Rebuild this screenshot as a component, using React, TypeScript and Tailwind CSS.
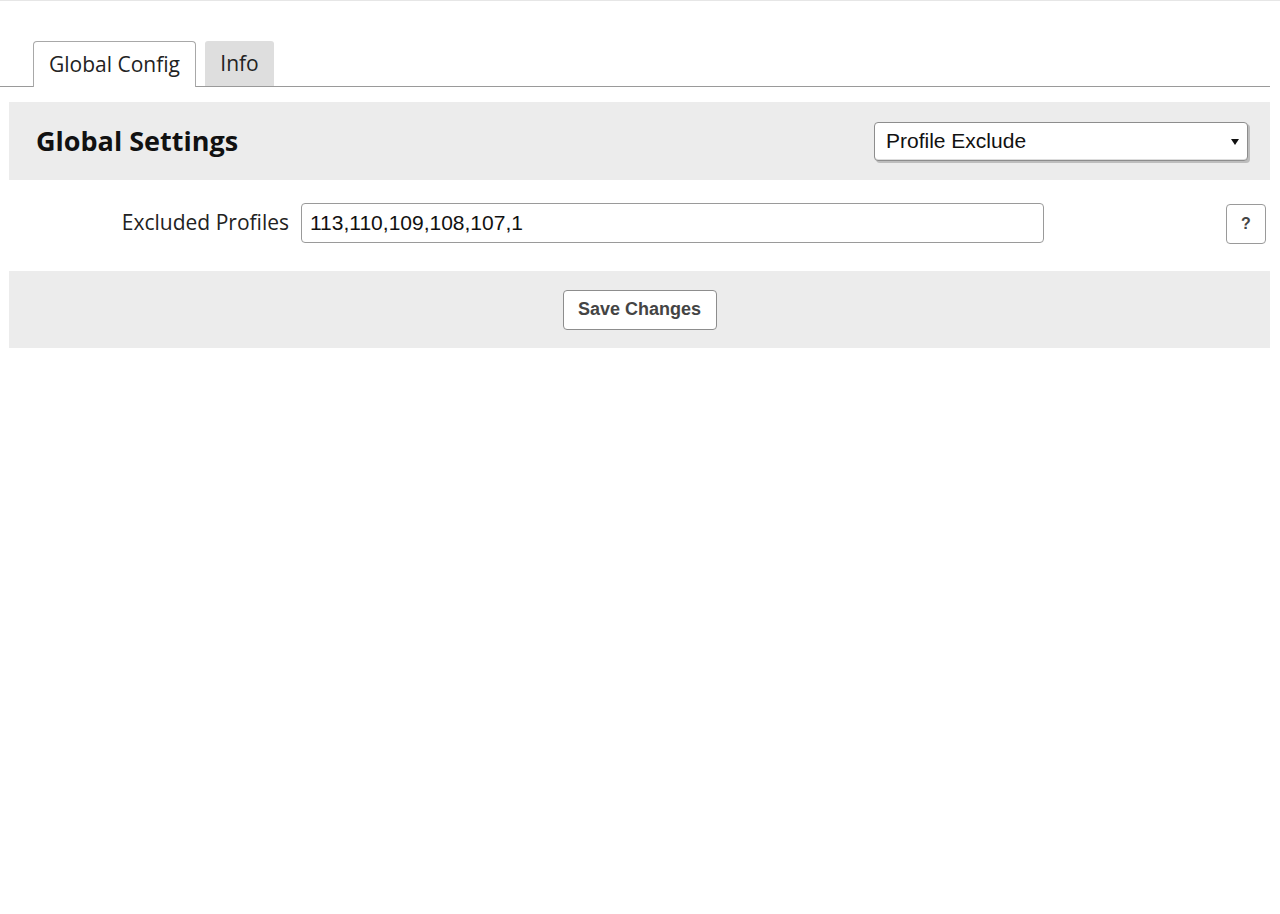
import React from "react";

const openSans = { fontFamily: '"Open Sans", "Noto Sans", sans-serif' };
const helv = { fontFamily: '"Liberation Sans", Arial, sans-serif' };

const App = () => {
  return (
    <div className="min-h-[914px] w-[1280px] bg-white border-t border-[#e6e6e6]">
      <div className="w-[1270px]">
        {/* tabs */}
        <div className="flex items-end gap-[9px] pl-[33px] pt-[40px] border-b border-[#9a9a9a]" style={openSans}>
          <div className="relative -mb-px flex h-[46px] w-[163px] items-center justify-center rounded-t-[4px] border border-b-0 border-[#a8a8a8] bg-white text-[21px] text-[#222]">
            Global Config
          </div>
          <div className="flex h-[45px] w-[69px] items-center justify-center rounded-t-[3px] bg-[#dedede] text-[21px] text-[#222]">
            Info
          </div>
        </div>

        <div className="ml-[9px] mt-[15px]">
          {/* header */}
          <div className="flex h-[78px] items-center justify-between bg-[#ececec] pl-[27px] pr-[22px]">
            <h1 className="text-[27px] font-bold text-[#111]" style={openSans}>
              Global Settings
            </h1>
            <div className="relative flex h-[39px] w-[374px] items-center rounded-[4px] border border-[#8d8d8d] bg-white pl-[11px] shadow-[inset_0_-1px_0_#ddd,2px_2px_0_#bdbdbd]">
              <span className="text-[21px] text-[#111]" style={helv}>
                Profile Exclude
              </span>
              <span className="absolute right-[8px] top-[16px] h-0 w-0 border-x-[4px] border-t-[6px] border-x-transparent border-t-[#111]" />
            </div>
          </div>

          {/* row */}
          <div className="flex h-[91px] items-start pr-[4px] pt-[23px]">
            <label className="flex h-[40px] w-[280px] items-center justify-end text-[21px] text-[#222]" style={openSans}>
              Excluded Profiles
            </label>
            <div className="ml-[12px] flex h-[40px] w-[743px] items-center rounded-[4px] border border-[#9a9a9a] bg-white pl-[8px]">
              <span className="text-[21px] text-[#111]" style={helv}>
                113,110,109,108,107,1
              </span>
            </div>
            <div className="flex-1" />
            <button className="mt-px flex h-[40px] w-[40px] items-center justify-center rounded-[4px] border border-[#9a9a9a] bg-white text-[16px] font-bold text-[#444]" style={helv}>
              ?
            </button>
          </div>

          {/* footer */}
          <div className="flex h-[77px] items-center justify-center bg-[#ececec]">
            <button className="h-[40px] w-[154px] rounded-[4px] border border-[#8d8d8d] bg-white text-[18px] font-bold text-[#444]" style={helv}>
              Save Changes
            </button>
          </div>
        </div>
      </div>
    </div>
  );
};

export default App;
